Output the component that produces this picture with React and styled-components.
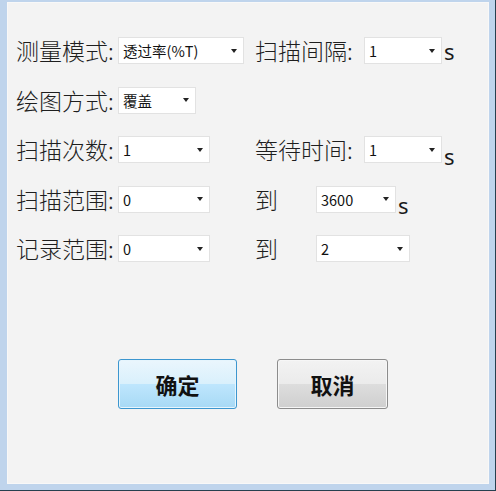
import React from "react";
import styled, { createGlobalStyle } from "styled-components";

const GlobalStyle = createGlobalStyle`
  html, body {
    margin: 0;
    padding: 0;
    background: #f3f3f3;
  }
`;

const Frame = styled.div`
  box-sizing: border-box;
  width: 496px;
  height: 491px;
  background: #bfd4ec;
  padding: 2px 6px 6px 7px;
  border-right: 1px solid #27404f;
  border-bottom: 1px solid #27404f;
  display: flex;
`;

const Content = styled.div`
  flex: 1;
  background: #f3f3f3;
  border: 1px solid #f8f8f8;
  padding: 34px 0 0 8px;
  display: flex;
  flex-direction: column;
  font-family: "Noto Sans CJK SC", "Noto Sans", sans-serif;
  color: #1a1a1a;
`;

const Row = styled.div`
  display: flex;
  align-items: center;
  height: 27px;
  margin-bottom: 22.5px;
`;

const Cell = styled.div`
  display: flex;
  align-items: center;
  width: ${(p) => (p.$w ? `${p.$w}px` : "auto")};
  flex-shrink: 0;
`;

const Label = styled.span`
  font-size: 23px;
  font-weight: 300;
  line-height: 27px;
  width: ${(p) => (p.$w ? `${p.$w}px` : "auto")};
  white-space: nowrap;
  color: #1e1e1e;
`;

const Select = styled.div`
  box-sizing: border-box;
  width: ${(p) => p.$w}px;
  height: 27px;
  background: #ffffff;
  border: 1px solid #e2e2e2;
  display: flex;
  align-items: center;
  justify-content: space-between;
  padding: 0 6px 0 4px;
  font-family: "Noto Sans CJK SC", "Noto Sans", sans-serif;
  font-size: 14.5px;
  color: #111;
`;

const Arrow = styled.span`
  width: 0;
  height: 0;
  border-left: 3.5px solid transparent;
  border-right: 3.5px solid transparent;
  border-top: 4px solid #222;
`;

const Unit = styled.span`
  font-family: "Noto Sans", sans-serif;
  font-size: 22px;
  margin-left: 2px;
  position: relative;
  top: ${(p) => p.$drop || 0}px;
`;

const Buttons = styled.div`
  display: flex;
  margin-top: 74px;
  padding-left: 102px;
  gap: 40px;
`;

const Button = styled.button`
  box-sizing: border-box;
  width: ${(p) => p.$w}px;
  height: 50px;
  border-radius: 3px;
  font-family: "Noto Sans CJK SC", "Noto Sans", sans-serif;
  font-weight: 700;
  font-size: 22px;
  color: #111;
  cursor: pointer;
  border: 1px solid ${(p) => (p.$primary ? "#3c96cf" : "#8c8c8c")};
  background: ${(p) =>
    p.$primary
      ? "linear-gradient(#eaf6fd 0%, #d9f0fc 50%, #bee6fd 51%, #a7d9f5 100%)"
      : "linear-gradient(#f2f2f2 0%, #ebebeb 50%, #dddddd 51%, #cfcfcf 100%)"};
  box-shadow: inset 0 0 0 1px ${(p) => (p.$primary ? "#e6f5fd" : "#f6f6f6")};
`;

const Dropdown = ({ w, value }) => (
  <Select $w={w}>
    <span>{value}</span>
    <Arrow />
  </Select>
);

const App = () => {
  return (
    <>
      <GlobalStyle />
      <Frame>
        <Content>
          <Row>
            <Cell $w={239}>
              <Label $w={102}>测量模式:</Label>
              <Dropdown w={126} value="透过率(%T)" />
            </Cell>
            <Cell>
              <Label $w={109}>扫描间隔:</Label>
              <Dropdown w={78} value="1" />
              <Unit>s</Unit>
            </Cell>
          </Row>
          <Row>
            <Cell $w={239}>
              <Label $w={102}>绘图方式:</Label>
              <Dropdown w={78} value="覆盖" />
            </Cell>
          </Row>
          <Row>
            <Cell $w={239}>
              <Label $w={102}>扫描次数:</Label>
              <Dropdown w={92} value="1" />
            </Cell>
            <Cell>
              <Label $w={109}>等待时间:</Label>
              <Dropdown w={78} value="1" />
              <Unit $drop={6}>s</Unit>
            </Cell>
          </Row>
          <Row>
            <Cell $w={239}>
              <Label $w={102}>扫描范围:</Label>
              <Dropdown w={92} value="0" />
            </Cell>
            <Cell>
              <Label $w={61}>到</Label>
              <Dropdown w={80} value="3600" />
              <Unit $drop={6}>s</Unit>
            </Cell>
          </Row>
          <Row>
            <Cell $w={239}>
              <Label $w={102}>记录范围:</Label>
              <Dropdown w={92} value="0" />
            </Cell>
            <Cell>
              <Label $w={61}>到</Label>
              <Dropdown w={94} value="2" />
            </Cell>
          </Row>
          <Buttons>
            <Button $primary $w={119}>确定</Button>
            <Button $w={111}>取消</Button>
          </Buttons>
        </Content>
      </Frame>
    </>
  );
};

export default App;
